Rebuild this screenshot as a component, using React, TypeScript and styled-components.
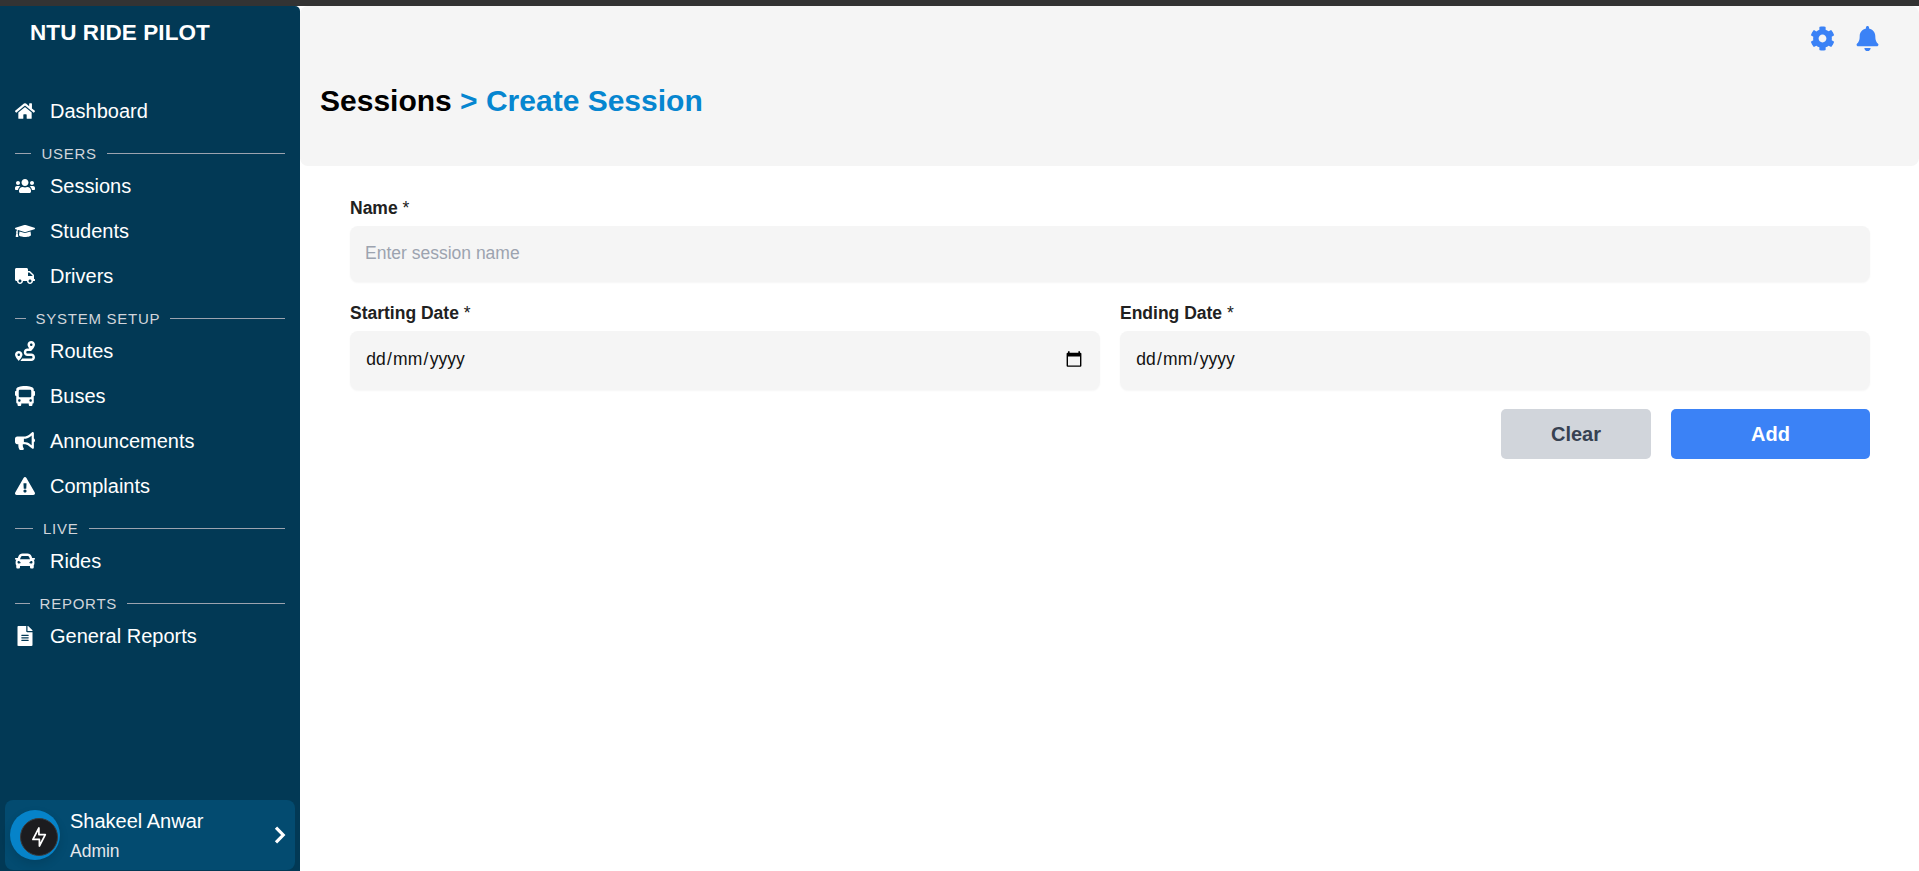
import React from "react";
import styled, { createGlobalStyle } from "styled-components";
import {
  FaHome, FaUsers, FaGraduationCap, FaTruck, FaRoute, FaBus,
  FaBullhorn, FaExclamationTriangle, FaCar, FaFileAlt, FaCog, FaBell,
} from "react-icons/fa";
import type { IconType } from "react-icons";

const GlobalStyle = createGlobalStyle`
  *, *::before, *::after { box-sizing: border-box; }
  body {
    margin: 0;
    background: #fff;
    font-family: "Liberation Sans", Arial, sans-serif;
    overflow: hidden;
  }
  button, input { font: inherit; border: 0; }
`;

const Page = styled.div`
  height: 871px;
  display: flex;
  flex-direction: column;
  background: #fff;
`;

const TopStrip = styled.div`
  flex: 0 0 6px;
  background: #333;
`;

const Body = styled.div`
  flex: 1;
  min-height: 0;
  display: flex;
`;

const Sidebar = styled.aside`
  flex: 0 0 300px;
  display: flex;
  flex-direction: column;
  background: #023955;
  color: #fff;
  border-top-right-radius: 5px;
`;

const Brand = styled.h1`
  margin: 0;
  padding: 12px 30px 0;
  height: 82.5px;
  font-size: 22.5px;
  line-height: 30px;
  font-weight: 700;
  letter-spacing: 0.08px;
`;

const Nav = styled.nav`
  flex: 1;
  display: flex;
  flex-direction: column;
`;

const NavItem = styled.a`
  display: flex;
  align-items: center;
  gap: 15px;
  height: 45px;
  padding-left: 15px;
  font-size: 20px;
  color: #fff;

  svg { width: 20px; height: 20px; }
`;

const SectionTitle = styled.div`
  display: flex;
  align-items: center;
  height: 30px;
  margin-top: 5px;
  margin-bottom: -5px;
  padding: 0 15px;
  font-size: 15px;
  line-height: 20px;
  letter-spacing: 0.75px;
  color: #d1d5db;
  white-space: nowrap;
`;

const Rule = styled.span<{ $width?: number }>`
  height: 1px;
  background: #9ca3af;
  ${({ $width }) => ($width ? `flex: 0 0 ${$width}px;` : "flex: 1;")}
`;

const SectionName = styled.span`
  margin: 0 10px;
`;

const UserCard = styled.div`
  display: flex;
  align-items: center;
  height: 70px;
  margin: 0 5px 1px;
  padding: 0 9px 0 5px;
  border-radius: 8px;
  background: #034b70;
`;

const Avatar = styled.div`
  display: flex;
  align-items: center;
  justify-content: center;
  width: 50px;
  height: 50px;
  padding: 3px 0 0 8px;
  border-radius: 50%;
  background: #0683c9;
  box-shadow: 0 4px 10px rgba(0, 0, 0, 0.12);
`;

const AvatarCore = styled.div`
  display: flex;
  align-items: center;
  justify-content: center;
  flex: 0 0 38px;
  height: 38px;
  border: 1px solid #3a3a3c;
  border-radius: 50%;
  background: #1c1c1f;
`;

const UserText = styled.div`
  flex: 1;
  padding-left: 10px;
`;

const UserName = styled.div`
  font-size: 20px;
  line-height: 30px;
`;

const UserRole = styled.div`
  font-size: 17.5px;
  line-height: 25px;
  margin-top: 3px;
  color: #e5e7eb;
`;

const Main = styled.main`
  flex: 1;
  display: flex;
  flex-direction: column;
`;

const Header = styled.header`
  height: 160px;
  padding: 0 20px;
  border-radius: 8px;
  background: #f5f5f5;
`;

const Actions = styled.div`
  display: flex;
  justify-content: flex-end;
  gap: 20px;
  height: 67px;
  padding: 20px 19px 0 0;
  color: #3b82f6;

  svg { width: 25px; height: 25px; }
`;

const Breadcrumb = styled.h2`
  margin: 0;
  padding-top: 8px;
  font-size: 30px;
  line-height: 40px;
  font-weight: 700;
  color: #000;
`;

const Current = styled.span`
  color: #0686d0;
`;

const Form = styled.form`
  display: flex;
  flex-direction: column;
  padding: 30px 49px 0 50px;
`;

const FieldRow = styled.div`
  display: flex;
  gap: 20px;
  margin-bottom: 19px;
`;

const Field = styled.label`
  flex: 1;
  display: flex;
  flex-direction: column;
  font-size: 17.5px;
  line-height: 25px;
  color: #212121;
`;

const LabelText = styled.span`
  margin-bottom: 5px;
  font-weight: 700;
`;

const Star = styled.span`
  font-weight: 400;
`;

const TextInput = styled.input`
  height: 56px;
  padding: 0 15px 2px;
  border-radius: 8px;
  background: #f5f5f5;
  box-shadow: 0 1px 2px rgba(0, 0, 0, 0.04);
  outline: 0;

  &::placeholder { color: #9ca3af; opacity: 1; }
`;

const DateBox = styled.div`
  display: flex;
  align-items: center;
  justify-content: space-between;
  height: 59px;
  padding: 0 17px 3px 15px;
  border-radius: 8px;
  background: #f5f5f5;
  box-shadow: 0 1px 2px rgba(0, 0, 0, 0.04);
  color: #111;
`;

const DatePart = styled.span`
  padding: 0 1.25px;
`;

const Buttons = styled.div`
  display: flex;
  justify-content: flex-end;
  gap: 20px;
`;

const Button = styled.button<{ $primary?: boolean }>`
  width: ${({ $primary }) => ($primary ? 199 : 150)}px;
  height: 50px;
  padding: 0;
  border-radius: 5px;
  font-size: 20px;
  font-weight: 700;
  color: ${({ $primary }) => ($primary ? "#fff" : "#374151")};
  background: ${({ $primary }) => ($primary ? "#3b82f6" : "#d1d5db")};
`;

type Group = { title?: string; lead?: number; items: [string, IconType][] };

const groups: Group[] = [
  { items: [["Dashboard", FaHome]] },
  { title: "USERS", lead: 16.4, items: [["Sessions", FaUsers], ["Students", FaGraduationCap], ["Drivers", FaTruck]] },
  {
    title: "SYSTEM SETUP", lead: 10.5,
    items: [["Routes", FaRoute], ["Buses", FaBus], ["Announcements", FaBullhorn], ["Complaints", FaExclamationTriangle]],
  },
  { title: "LIVE", lead: 18, items: [["Rides", FaCar]] },
  { title: "REPORTS", lead: 14.6, items: [["General Reports", FaFileAlt]] },
];

const CalendarIcon = () => (
  <svg width="18" height="18" viewBox="0 0 18 18">
    <path d="M3 1.2h1.6v1.6h8.8V1.2H15v1.6h.4q1 0 1 1v12q0 1-1 1H2.6q-1 0-1-1v-12q0-1 1-1H3zM3 6.6v8.8h12V6.6z" fill="#000" fillRule="evenodd" />
  </svg>
);

const BoltIcon = () => (
  <svg width="18" height="22" viewBox="0 0 18 22" fill="none" stroke="#fff" strokeWidth="1.7" strokeLinejoin="round">
    <path d="M8.9 2v6.6h6.4L9.4 20v-6.6H2.9z" />
  </svg>
);

const Chevron = () => (
  <svg width="12" height="18" viewBox="0 0 12 18" fill="none" stroke="#fff" strokeWidth="3.2">
    <path d="M2 1.7l7.2 7.3L2 16.3" />
  </svg>
);

const DateField = ({ label, picker }: { label: string; picker?: boolean }) => (
  <Field as="div">
    <LabelText>{label} <Star>*</Star></LabelText>
    <DateBox>
      <span>
        <DatePart>dd</DatePart>/<DatePart>mm</DatePart>/<DatePart>yyyy</DatePart>
      </span>
      {picker && <CalendarIcon />}
    </DateBox>
  </Field>
);

export default function App() {
  return (
    <Page>
      <GlobalStyle />
      <TopStrip />
      <Body>
        <Sidebar>
          <Brand>NTU RIDE PILOT</Brand>
          <Nav>
            {groups.map(({ title, lead, items }) => (
              <React.Fragment key={title ?? "top"}>
                {title && (
                  <SectionTitle>
                    <Rule $width={lead} />
                    <SectionName>{title}</SectionName>
                    <Rule />
                  </SectionTitle>
                )}
                {items.map(([name, Icon]) => (
                  <NavItem key={name}><Icon />{name}</NavItem>
                ))}
              </React.Fragment>
            ))}
          </Nav>
          <UserCard>
            <Avatar><AvatarCore><BoltIcon /></AvatarCore></Avatar>
            <UserText>
              <UserName>Shakeel Anwar</UserName>
              <UserRole>Admin</UserRole>
            </UserText>
            <Chevron />
          </UserCard>
        </Sidebar>
        <Main>
          <Header>
            <Actions><FaCog /><FaBell /></Actions>
            <Breadcrumb>Sessions <Current>&gt; Create Session</Current></Breadcrumb>
          </Header>
          <Form>
            <FieldRow>
              <Field>
                <LabelText>Name <Star>*</Star></LabelText>
                <TextInput placeholder="Enter session name" />
              </Field>
            </FieldRow>
            <FieldRow>
              <DateField label="Starting Date" picker />
              <DateField label="Ending Date" />
            </FieldRow>
            <Buttons>
              <Button type="button">Clear</Button>
              <Button type="button" $primary>Add</Button>
            </Buttons>
          </Form>
        </Main>
      </Body>
    </Page>
  );
}
